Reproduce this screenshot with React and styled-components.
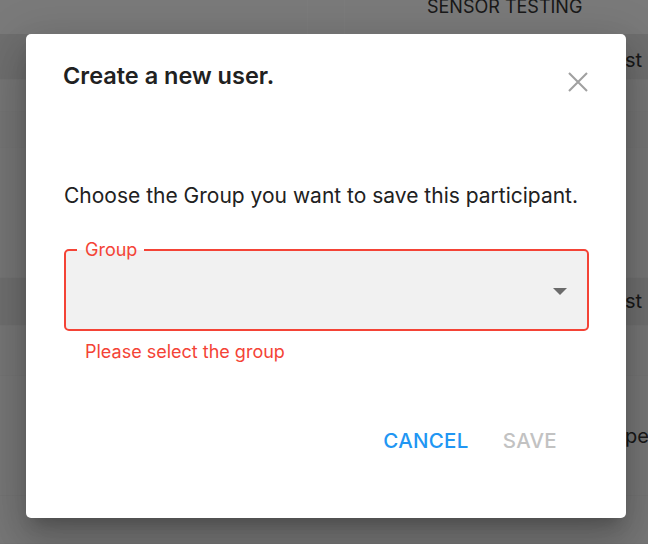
import React from "react";
import styled, { createGlobalStyle } from "styled-components";

const GlobalStyle = createGlobalStyle`
  html, body {
    margin: 0;
    padding: 0;
    width: 648px;
    height: 544px;
    overflow: hidden;
    font-family: Inter, "Noto Sans", sans-serif;
  }
`;

const Page = styled.div`
  position: relative;
  width: 648px;
  height: 544px;
  background: #eeeeee;
  display: flex;
  flex-direction: column;
  overflow: hidden;
`;

const HeaderRow = styled.div`
  height: 34px;
  flex-shrink: 0;
  display: flex;
  background: #f4f4f4;
`;

const HeaderCell = styled.div`
  width: ${(p) => p.$w}px;
  flex-shrink: 0;
  border-right: 1px solid #f8f8f8;
  font-size: 18px;
  color: #333;
  padding-left: ${(p) => p.$pad || 0}px;
  line-height: 14px;
  white-space: nowrap;
`;

const Row = styled.div`
  height: ${(p) => p.$h}px;
  flex-shrink: 0;
  background: ${(p) => p.$bg};
  border-bottom: 1px solid #e8e8e8;
  box-sizing: border-box;
  display: flex;
  align-items: center;
  justify-content: flex-end;
  font-size: 20px;
  color: #333;
  white-space: nowrap;
  overflow: hidden;
`;

const RowText = styled.span`
  width: 23px;
  overflow: hidden;
  margin-top: ${(p) => p.$mt || 0}px;
`;

const Backdrop = styled.div`
  position: absolute;
  inset: 0;
  background: rgba(0, 0, 0, 0.5);
  display: flex;
  align-items: flex-start;
  justify-content: flex-start;
  padding: 34px 0 0 26px;
`;

const Dialog = styled.div`
  width: 600px;
  height: 484px;
  background: #fff;
  border-radius: 5px;
  box-sizing: border-box;
  box-shadow: 0px 11px 15px -7px rgba(0, 0, 0, 0.2),
    0px 24px 38px 3px rgba(0, 0, 0, 0.14), 0px 9px 46px 8px rgba(0, 0, 0, 0.12);
  display: flex;
  flex-direction: column;
  padding: 26px 37px 0 37px;
`;

const TitleBar = styled.div`
  display: flex;
  justify-content: space-between;
  align-items: flex-start;
`;

const Title = styled.h2`
  margin: 0;
  font-size: 23.5px;
  font-weight: 600;
  line-height: 32px;
  color: #212121;
`;

const CloseButton = styled.button`
  border: none;
  background: none;
  padding: 0;
  margin: 12px 1px 0 0;
  width: 20px;
  height: 20px;
  display: flex;
  align-items: center;
  justify-content: center;
  cursor: pointer;
`;

const Prompt = styled.p`
  margin: 89px 0 0 1px;
  font-size: 21px;
  line-height: 30px;
  color: #212121;
  white-space: nowrap;
`;

const Field = styled.div`
  position: relative;
  margin: 38px 0 0 1px;
  width: 525px;
  height: 82px;
  box-sizing: border-box;
  border: 2px solid #f44336;
  border-radius: 5px;
  background: #f1f1f1;
  display: flex;
  align-items: center;
  justify-content: flex-end;
`;

const Label = styled.label`
  position: absolute;
  left: 11px;
  top: -12px;
  padding: 0 7px 0 8px;
  font-size: 18px;
  line-height: 22px;
  color: #f44336;
  background: linear-gradient(to bottom, #fff 0, #fff 11px, #f1f1f1 11px);
`;

const Arrow = styled.span`
  width: 0;
  height: 0;
  border-left: 7px solid transparent;
  border-right: 7px solid transparent;
  border-top: 7px solid #6b6b6b;
  margin: 2px 20px 0 0;
`;

const Helper = styled.div`
  margin: 10px 0 0 22px;
  font-size: 18px;
  line-height: 22px;
  color: #f44336;
`;

const Actions = styled.div`
  margin-top: 65px;
  display: flex;
  justify-content: flex-end;
  gap: 34px;
  padding-right: 32px;
`;

const ActionButton = styled.button`
  border: none;
  background: none;
  padding: 0;
  font-family: Inter, "Noto Sans", sans-serif;
  font-size: 20.5px;
  font-weight: 500;
  letter-spacing: 0.3px;
  line-height: 26px;
  color: ${(p) => (p.$disabled ? "#c2c2c2" : "#2196f3")};
  cursor: ${(p) => (p.$disabled ? "default" : "pointer")};
`;

const CloseIcon = () => (
  <svg width="20" height="20" viewBox="0 0 20 20">
    <path d="M1 1 L19 19 M19 1 L1 19" stroke="#a0a0a0" strokeWidth="2.1" fill="none" />
  </svg>
);

export default function App() {
  return (
    <>
      <GlobalStyle />
      <Page>
        <HeaderRow>
          <HeaderCell $w={307} />
          <HeaderCell $w={36} />
          <HeaderCell $w={305} $pad={82}>SENSOR TESTING</HeaderCell>
        </HeaderRow>
        <Row $h={46} $bg="#dedede">
          <RowText $mt={6}>st .</RowText>
        </Row>
        <Row $h={32} $bg="#ececec" />
        <Row $h={36} $bg="#eaeaea" />
        <Row $h={130} $bg="#ececec" />
        <Row $h={48} $bg="#dedede">
          <RowText $mt={-2}>st .</RowText>
        </Row>
        <Row $h={50} $bg="#ececec" />
        <Row $h={120} $bg="#eeeeee">
          <RowText>pen</RowText>
        </Row>
        <Row $h={48} $bg="#efefef" />
        <Backdrop>
          <Dialog>
            <TitleBar>
              <Title>Create a new user.</Title>
              <CloseButton aria-label="close">
                <CloseIcon />
              </CloseButton>
            </TitleBar>
            <Prompt>Choose the Group you want to save this participant.</Prompt>
            <Field>
              <Label>Group</Label>
              <Arrow />
            </Field>
            <Helper>Please select the group</Helper>
            <Actions>
              <ActionButton>CANCEL</ActionButton>
              <ActionButton $disabled>SAVE</ActionButton>
            </Actions>
          </Dialog>
        </Backdrop>
      </Page>
    </>
  );
}
